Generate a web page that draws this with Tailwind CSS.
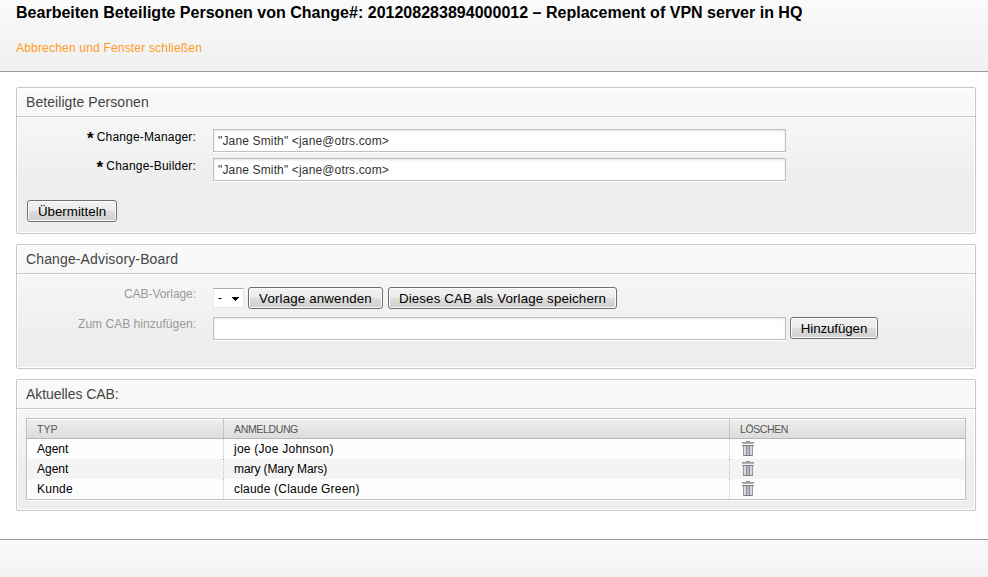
<!DOCTYPE html>
<html lang="de">
<head>
<meta charset="utf-8">
<title>Beteiligte Personen</title>
<script src="https://cdn.jsdelivr.net/npm/@tailwindcss/browser@4"></script>
</head>
<body class="flex h-[577px] w-[988px] flex-col overflow-hidden bg-white font-['Liberation_Sans',Arial,sans-serif] text-[12px] leading-[15px] text-black">
<svg class="hidden">
  <symbol id="trash" viewBox="0 0 12 15" shape-rendering="crispEdges">
    <path fill="#999" d="M4 0h4v1H4zM0 1h12v1H0z"/><path fill="#b4b4b4" d="M0 2h12v1H0z"/>
    <path fill="#808080" d="M0 4h12v1H0zM1 14h10v1H1z"/><path fill="#999" d="M1 5h10v9H1z"/>
    <path fill="#dcdcdc" d="M2 5h2v9H2z"/><path fill="#8c8c8c" d="M4 5h1v9H4z"/><path fill="#b9b8c8" d="M5 5h2v9H5z"/><path fill="#8a8a94" d="M7 5h1v9H7z"/><path fill="#d6d5e8" d="M8 5h2v9H8z"/>
  </symbol>
</svg>

<header class="h-[72px] shrink-0 border-b border-[#999] bg-linear-to-b from-[#fafafa] to-[#f0f0f0] px-4 pt-1">
  <h1 class="text-[16px] leading-[18px] font-bold tracking-[0.012px] whitespace-nowrap">Bearbeiten Beteiligte Personen von Change#: 201208283894000012 – Replacement of VPN server in HQ</h1>
  <a class="mt-[19px] block tracking-[0.19px] text-[#ff9b1e]">Abbrechen und Fenster schließen</a>
</header>

<main class="flex flex-1 flex-col gap-[10px] pt-[15px] pr-3 pl-4">
  <section class="h-[147px] rounded-[2px] border border-[#c8c8c8] bg-[#ededed] bg-linear-to-b from-[#fafafa] to-[#ededed] to-[100px] shadow-[inset_0_0_0_1px_#fff]">
    <h2 class="flex h-[29px] items-center border-b border-[#c8c8c8] pl-[9px] text-[14px] tracking-[0.07px] text-[#444] shadow-[0_1px_0_#fff]">Beteiligte Personen</h2>
    <div class="flex flex-col gap-[6px] pt-3">
      <div class="flex h-[23px]">
        <label class="mr-[17px] flex w-[179px] justify-end gap-[3px] pt-px tracking-[0.17px]"><b class="pt-px text-[17px]">*</b><span>Change-Manager:</span></label>
        <div class="flex h-[23px] w-[573px] items-center border border-[#c0c0c0] bg-white pt-[2px] pl-1 tracking-[0.15px] text-[#333] shadow-[inset_0_1px_3px_#e4e4e4,0_1px_0_#fff]">"Jane Smith" &lt;jane@otrs.com&gt;</div>
      </div>
      <div class="flex h-[23px]">
        <label class="mr-[17px] flex w-[179px] justify-end gap-[3px] pt-px tracking-[0.2px]"><b class="pt-px text-[17px]">*</b><span>Change-Builder:</span></label>
        <div class="flex h-[23px] w-[573px] items-center border border-[#c0c0c0] bg-white pt-[2px] pl-1 tracking-[0.15px] text-[#333] shadow-[inset_0_1px_3px_#e4e4e4,0_1px_0_#fff]">"Jane Smith" &lt;jane@otrs.com&gt;</div>
      </div>
    </div>
    <button class="mt-[19px] ml-[10px] flex h-[22px] w-[90px] items-center justify-center rounded-[3px] border border-[#707070] bg-[linear-gradient(#f2f2f2,#ebebeb_50%,#dddddd_50%,#cfcfcf)] text-[13.33px] whitespace-nowrap shadow-[inset_0_0_0_1px_#fcfcfc]">Übermitteln</button>
  </section>

  <section class="h-[125px] rounded-[2px] border border-[#c8c8c8] bg-[#ededed] bg-linear-to-b from-[#fafafa] to-[#ededed] to-[100px] shadow-[inset_0_0_0_1px_#fff]">
    <h2 class="flex h-[29px] items-center border-b border-[#c8c8c8] pl-[9px] text-[14px] tracking-[0.13px] text-[#444] shadow-[0_1px_0_#fff]">Change-Advisory-Board</h2>
    <div class="flex h-[43px] pt-[13px] text-[#999]">
      <label class="mr-[17px] w-[179px] text-right tracking-[-0.06px]">CAB-Vorlage:</label>
      <div class="mt-px mr-1 flex h-5 w-[31px] items-center justify-between border border-[#e3e9ef] border-t-[#abadb3] bg-white pr-1 pl-1 text-black"><span>-</span><svg class="mt-[2px] h-1 w-[7px]" viewBox="0 0 7 4" shape-rendering="crispEdges"><path d="M0 0h7v1H0zM1 1h5v1H1zM2 2h3v1H2zM3 3h1v1H3z"/></svg></div>
      <button class="mr-[5px] flex h-[22px] w-[135px] items-center justify-center rounded-[3px] border border-[#707070] bg-[linear-gradient(#f2f2f2,#ebebeb_50%,#dddddd_50%,#cfcfcf)] text-[13.33px] tracking-[0.15px] whitespace-nowrap text-black shadow-[inset_0_0_0_1px_#fcfcfc]">Vorlage anwenden</button>
      <button class="flex h-[22px] w-[229px] items-center justify-center rounded-[3px] border border-[#707070] bg-[linear-gradient(#f2f2f2,#ebebeb_50%,#dddddd_50%,#cfcfcf)] text-[13.33px] tracking-[0.13px] whitespace-nowrap text-black shadow-[inset_0_0_0_1px_#fcfcfc]">Dieses CAB als Vorlage speichern</button>
    </div>
    <div class="flex text-[#999]">
      <label class="mr-[17px] w-[179px] text-right tracking-[0.03px]">Zum CAB hinzufügen:</label>
      <div class="mr-1 h-[23px] w-[573px] border border-[#c0c0c0] bg-white shadow-[inset_0_1px_3px_#e4e4e4,0_1px_0_#fff]"></div>
      <button class="flex h-[22px] w-[88px] items-center justify-center rounded-[3px] border border-[#707070] bg-[linear-gradient(#f2f2f2,#ebebeb_50%,#dddddd_50%,#cfcfcf)] text-[13.33px] tracking-[-0.1px] whitespace-nowrap text-black shadow-[inset_0_0_0_1px_#fcfcfc]">Hinzufügen</button>
    </div>
  </section>

  <section class="h-[132px] rounded-[2px] border border-[#c8c8c8] bg-[#ededed] bg-linear-to-b from-[#fafafa] to-[#ededed] to-[100px] shadow-[inset_0_0_0_1px_#fff]">
    <h2 class="flex h-[29px] items-center border-b border-[#c8c8c8] pl-[9px] text-[14px] tracking-[-0.05px] text-[#444] shadow-[0_1px_0_#fff]">Aktuelles CAB:</h2>
    <div class="mx-[9px] mt-[9px] h-[82px] border border-[#c0c0c0] bg-[#fdfdfd] shadow-[0_1px_0_#fff]">
      <div class="flex h-5 border-b border-[#b8b8b8] bg-linear-to-b from-[#f0f0f0] to-[#dcdcdc] text-[10.5px] leading-5 text-[#555] shadow-[inset_0_1px_0_#fff]">
        <div class="w-[197px] border-r border-[#c4c4c4] pl-[10px] tracking-[0.1px]">TYP</div><div class="w-[506px] border-r border-[#c4c4c4] pl-[10px] tracking-[-0.35px]">ANMELDUNG</div><div class="pl-[10px] tracking-[-0.4px]">LÖSCHEN</div>
      </div>
      <div class="flex h-5 leading-5">
        <div class="w-[197px] border-r border-dotted border-[#c4c4c4] pl-[10px]">Agent</div><div class="w-[506px] border-r border-dotted border-[#c4c4c4] pl-[10px] tracking-[0.25px]">joe (Joe Johnson)</div><div class="pt-[2px] pl-3"><svg class="h-[15px] w-3"><use href="#trash"/></svg></div>
      </div>
      <div class="flex h-5 bg-[#f4f4f4] leading-5">
        <div class="w-[197px] border-r border-dotted border-[#c4c4c4] pl-[10px]">Agent</div><div class="w-[506px] border-r border-dotted border-[#c4c4c4] pl-[10px] tracking-[-0.09px]">mary (Mary Mars)</div><div class="pt-[2px] pl-3"><svg class="h-[15px] w-3"><use href="#trash"/></svg></div>
      </div>
      <div class="flex h-5 leading-5">
        <div class="w-[197px] border-r border-dotted border-[#c4c4c4] pl-[10px] tracking-[0.25px]">Kunde</div><div class="w-[506px] border-r border-dotted border-[#c4c4c4] pl-[10px] tracking-[0.2px]">claude (Claude Green)</div><div class="pt-[2px] pl-3"><svg class="h-[15px] w-3"><use href="#trash"/></svg></div>
      </div>
    </div>
  </section>
</main>
<footer class="h-[38px] shrink-0 border-t border-[#999] bg-linear-to-b from-[#fafafa] to-[#f3f3f3]"></footer>
</body>
</html>
